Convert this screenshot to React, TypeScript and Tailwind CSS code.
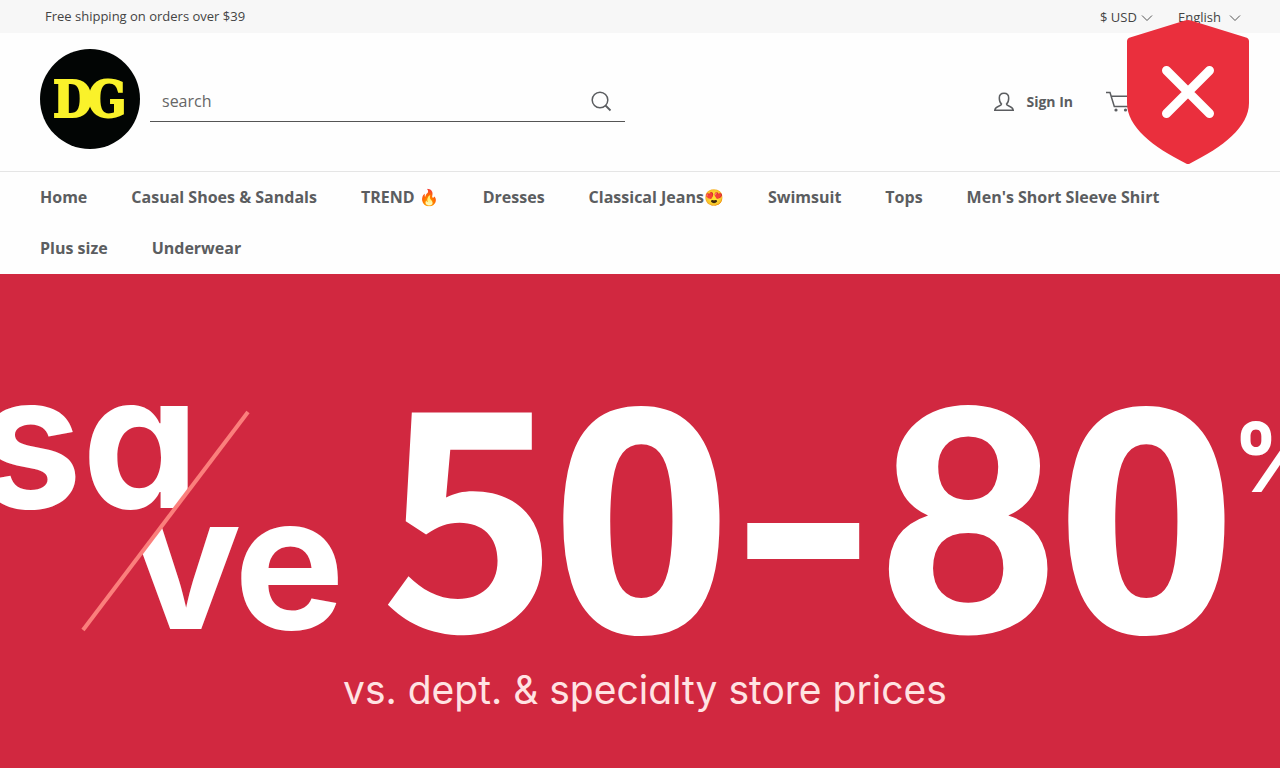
import React from "react";

const navLinks = [
    "Home",
    "Casual Shoes & Sandals",
    "TREND 🔥",
    "Dresses",
    "Classical Jeans😍",
    "Swimsuit",
    "Tops",
    "Men's Short Sleeve Shirt",
    "Plus size",
    "Underwear",
];

function Chevron() {
    return (
        <svg className="pointer-events-none -ml-3 h-3 w-3" viewBox="0 0 12 12" fill="none" stroke="#555" aria-hidden="true">
            <path d="M1 3.5 L6 8.5 L11 3.5" />
        </svg>
    );
}

function Logo() {
    return (
        <svg className="h-[100px] w-[100px] shrink-0" viewBox="0 0 100 100" role="img" aria-label="DG">
            <circle cx="50" cy="50" r="50" fill="#020504" />
            <g
                fill="#faf22a"
                stroke="#faf22a"
                strokeWidth="2"
                fontFamily="'DejaVu Serif Condensed', 'DejaVu Serif', serif"
                fontWeight="700"
                fontSize="50"
            >
                <text x="13" y="68">D</text>
                <text x="48" y="68">G</text>
            </g>
        </svg>
    );
}

function ShieldBadge() {
    return (
        <svg
            className="absolute right-[31px] top-[19px] z-10 h-[146px] w-[122px]"
            viewBox="0 0 122 146"
            role="img"
            aria-label="Blocked"
        >
            <path
                d="M58 1.6 Q61 0.6 64 1.6 L119 18.6 Q122 19.6 122 22.5 V84 C122 108 96 128 63 144.4 Q61 145.4 59 144.4 C26 128 0 108 0 84 V22.5 Q0 19.6 3 18.6 Z"
                fill="#ea2f3d"
            />
            <path d="M39.5 51.5 L82.5 94.5 M82.5 51.5 L39.5 94.5" stroke="#fff" strokeWidth="9" strokeLinecap="round" />
        </svg>
    );
}

function Banner() {
    return (
        <svg className="block h-auto w-full" viewBox="0 0 1280 494" fill="#fff" fontWeight="700">
            <rect width="1280" height="494" fill="#d12840" />
            <g fontFamily="Inter, sans-serif" fontSize="186" className="[font-feature-settings:'cv11']">
                <text x="-22" y="234">s</text>
                <text x="82" y="234">a</text>
                <text x="130" y="355">v</text>
                <text x="234" y="355">e</text>
            </g>
            {/* red wedges trim the "a" and "v" along the slash */}
            <path d="M192 211 L192 240 L171 240 Z M130 250 L163 250 L130 294 Z" fill="#d12840" />
            <path d="M248 138 L83 356" stroke="#fb7f7c" strokeWidth="4" />
            <text x="380" y="357" fontFamily="'Noto Sans CJK SC', sans-serif" fontSize="303">5</text>
            <g fontFamily="'Open Sans', sans-serif" fontSize="313">
                <text x="552" y="359">0</text>
                <text x="1057" y="359">0</text>
            </g>
            <text x="732" y="345" fontFamily="'DejaVu Sans', sans-serif" fontSize="285">–</text>
            <text x="878" y="359" fontFamily="Lato, sans-serif" fontWeight="900" fontSize="311">8</text>
            <text x="1232" y="218" fontFamily="Inter, sans-serif" fontSize="96">%</text>
            <text
                x="343"
                y="430"
                fill="#ffe3e3"
                fontFamily="Inter, sans-serif"
                fontWeight="400"
                fontSize="39"
                className="[font-feature-settings:'cv11']"
            >
                vs. dept. &amp; specialty store prices
            </text>
        </svg>
    );
}

export default function App() {
    return (
        <div className="relative min-h-screen bg-[#d12840] font-['Open_Sans',sans-serif] text-[#5b5d60]">
            <ShieldBadge />

            {/* Announcement bar */}
            <div className="flex h-[33px] items-center justify-between bg-[#f7f7f7] pl-[45px] pr-[39px] text-[13px] text-[#444]">
                <p>Free shipping on orders over $39</p>
                <div className="flex items-center gap-[25px] pt-0.5">
                    <div className="flex items-center">
                        <select aria-label="Currency" className="appearance-none bg-transparent pr-4">
                            <option>$ USD</option>
                        </select>
                        <Chevron />
                    </div>
                    <div className="flex items-center">
                        <select aria-label="Language" className="appearance-none bg-transparent pr-5">
                            <option>English</option>
                        </select>
                        <Chevron />
                    </div>
                </div>
            </div>

            <header className="bg-[#fefefe]">
                <div className="flex items-center px-10 pb-[22px] pt-4">
                    <a href="#">
                        <Logo />
                    </a>
                    <form className="ml-[10px] mt-1 flex h-[41px] w-[475px] items-center border-b border-[#555] pr-3">
                        <input
                            type="text"
                            aria-label="Search"
                            placeholder="search"
                            className="min-w-0 flex-1 bg-transparent px-3 text-base outline-none placeholder:text-[#666]"
                        />
                        <button type="button" aria-label="Submit search">
                            <svg className="h-6 w-6" viewBox="0 0 24 24" fill="none" stroke="#5b5d60" strokeWidth="1.5">
                                <circle cx="11" cy="11" r="7.8" />
                                <path d="M16.5 16.5 L21.5 21.5" strokeWidth="1.8" />
                            </svg>
                        </button>
                    </form>
                    <div className="ml-auto mt-[6px] flex items-center gap-[33px]">
                        <a href="#" className="flex items-center gap-3 text-sm font-bold">
                            <svg className="h-5 w-5" viewBox="0 0 20 20" fill="none" stroke="#5b5d60" strokeWidth="1.5">
                                <path d="M7.5 12 C5.5 10.5 5.3 8 5.3 6 C5.3 3 7 1.2 10 1.2 C13 1.2 14.7 3 14.7 6 C14.7 8 14.5 10.5 12.5 12 C12.3 14.5 18.5 13.5 19.2 18.2 H0.8 C1.5 13.5 7.7 14.5 7.5 12 Z" />
                            </svg>
                            Sign In
                        </a>
                        <a href="#" aria-label="Cart" className="flex w-[134px] items-center">
                            <svg className="h-6 w-6" viewBox="0 0 24 24" fill="none" stroke="#5b5d60" strokeWidth="1.5">
                                <path d="M0 2.5 H4 L8.3 16.5 H22 M5.5 6.3 H25" />
                                <circle cx="10" cy="20" r="1.6" fill="#5b5d60" stroke="none" />
                                <circle cx="19.5" cy="20" r="1.6" fill="#5b5d60" stroke="none" />
                            </svg>
                        </a>
                    </div>
                </div>
                <nav className="flex flex-wrap gap-x-11 border-t border-[#e5e5e5] px-10">
                    {navLinks.map((label) => (
                        <a key={label} href="#" className="text-base leading-[51px] font-bold">
                            {label}
                        </a>
                    ))}
                </nav>
            </header>

            <Banner />
        </div>
    );
}
